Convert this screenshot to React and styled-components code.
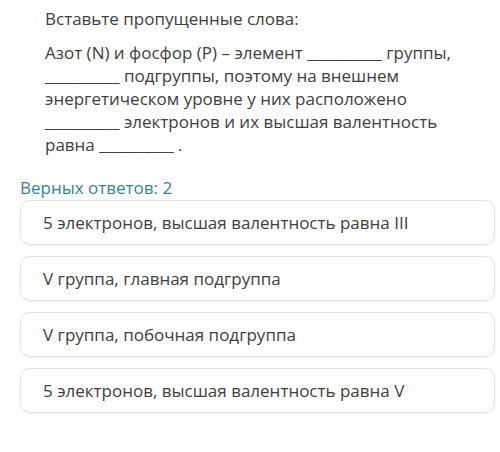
import React from 'react';
import styled, { createGlobalStyle } from 'styled-components';

const options = [
  "5 электронов, высшая валентность равна III",
  "V группа, главная подгруппа",
  "V группа, побочная подгруппа",
  "5 электронов, высшая валентность равна V"
];

const Global = createGlobalStyle`
body {
  margin: 0;
  background: #fff;
  font-family: "Open Sans", "Noto Sans", sans-serif;
}
`;

const Page = styled.div`
width: 500px;
height: 452px;
overflow: hidden;
background: #fff;
`;

const Question = styled.div`
padding: 7px 30px 0 45px;
color: #404040;
font-size: 17px;
line-height: 23px;
`;

const Title = styled.p`
margin: 0 0 11px;
`;

const Body = styled.p`
margin: 0;
`;

const Answers = styled.div`
padding: 20px 5px 0 20px;
`;

const Hint = styled.div`
color: #3a8098;
font-size: 17px;
line-height: 23px;
margin-bottom: 1px;
`;

const List = styled.div`
display: flex;
flex-direction: column;
gap: 11px;
`;

const Option = styled.div`
height: 45px;
box-sizing: border-box;
display: flex;
align-items: center;
padding: 0 22px;
border: 1px solid #e3e3e3;
border-radius: 10px;
box-shadow: 0 1px 2px rgba(0, 0, 0, 0.06);
color: #404040;
font-size: 17px;
`;

const blank = "__________";

function App() {
  return (
    <Page>
      <Global />
      <Question>
        <Title>Вставьте пропущенные слова:</Title>
        <Body>
          Азот (N) и фосфор (P) – элемент {blank} группы, {blank} подгруппы, поэтому на внешнем
          энергетическом уровне у них расположено {blank} электронов и их высшая валентность
          равна {blank} .
        </Body>
      </Question>
      <Answers>
        <Hint>Верных ответов: 2</Hint>
        <List>
          {options.map((item) => (
            <Option key={item}>{item}</Option>
          ))}
        </List>
      </Answers>
    </Page>
  );
}

export default App;
